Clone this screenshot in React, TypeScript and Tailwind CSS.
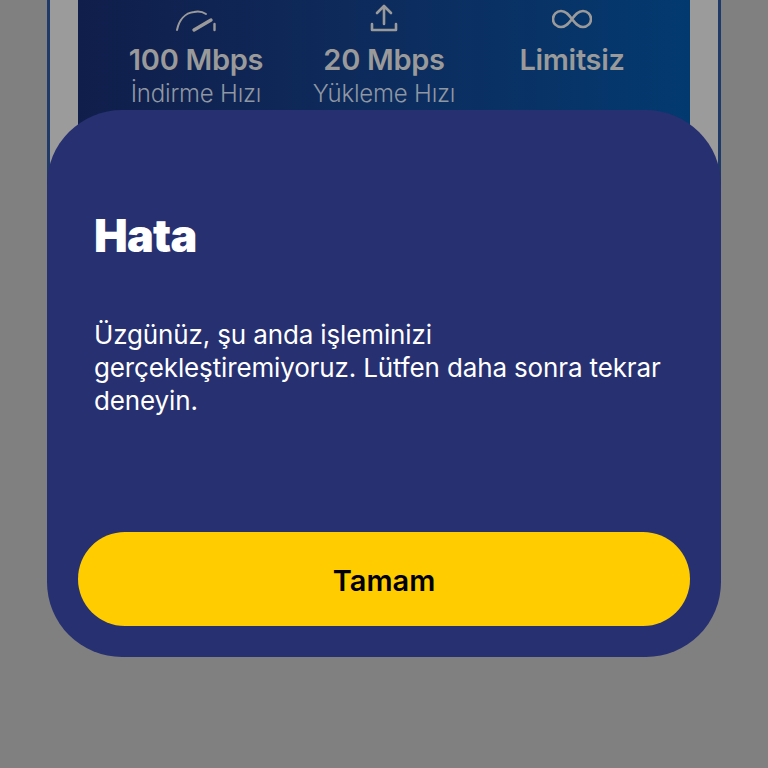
const font = { sans: 'font-["Inter",sans-serif]' };

function GaugeIcon() {
  return (
    <svg width="42" height="26" viewBox="0 0 42 26" fill="none" stroke="#9a9a9a" strokeWidth="2" strokeLinecap="round">
      <path d="M2 23C4 13 10 6 19 5c5-1 9 0 12 2" />
      <path d="M19 23 36 13" strokeWidth="3.4" />
      <path d="M39.500 17v6" strokeWidth="2.4" />
    </svg>
  );
}

function UploadIcon() {
  return (
    <svg width="28" height="30" viewBox="0 0 28 30" fill="none" stroke="#9a9a9a" strokeWidth="2.6" strokeLinecap="round" strokeLinejoin="round">
      <path d="M14 21V4M7 10l7-7 7 7" />
      <path d="M2 21v6h24v-6" />
    </svg>
  );
}

function InfinityIcon() {
  return (
    <svg width="40" height="20" viewBox="0 0 40 20" fill="none" stroke="#9a9a9a" strokeWidth="2.6" className="mb-[4px]">
      <path d="M20 10c-3-4-6-8-11-8a8 8 0 0 0 0 16c5 0 8-4 11-8s6-8 11-8a8 8 0 0 1 0 16c-5 0-8-4-11-8Z" />
    </svg>
  );
}

const stats = [
  { icon: <GaugeIcon />, value: '100 Mbps', label: 'İndirme Hızı' },
  { icon: <UploadIcon />, value: '20 Mbps', label: 'Yükleme Hızı' },
  { icon: <InfinityIcon />, value: 'Limitsiz', label: '' },
];

export default function App() {
  return (
    <div className={`relative h-[768px] w-[768px] overflow-hidden bg-[#808080] ${font.sans}`}>
      {/* page behind the dimmed overlay */}
      <div className="mx-[47px] h-[200px] border-x-[3px] border-[#1f3a68] bg-[#9b9b9b] px-[28px]">
        <div className="grid h-full grid-cols-3 bg-gradient-to-r from-[#101e4b] to-[#023a70] px-[24px]">
          {stats.map((s) => (
            <div key={s.value} className="flex flex-col items-center">
              <div className="flex h-[33px] items-end justify-center">{s.icon}</div>
              <div className="mt-[9px] text-[29px] leading-[36px] font-semibold tracking-[-0.3px] text-[#9a9a9a]">{s.value}</div>
              <div className="mt-[1px] text-[24px] leading-[30px] font-light tracking-[-0.2px] text-[#8f97a3]">{s.label}</div>
            </div>
          ))}
        </div>
      </div>

      {/* error dialog */}
      <div className="absolute top-[110px] left-[47px] flex h-[547px] w-[674px] flex-col rounded-[75px] bg-[#273070] px-[31px] pb-[31px]">
        <h1 className="mt-[100px] px-[16px] text-[45px] leading-[52px] font-black tracking-[-0.8px] text-white">Hata</h1>
        <p className="mt-[56px] px-[16px] text-[26px] leading-[33px] font-normal tracking-[-0.14px] text-white">
          Üzgünüz, şu anda işleminizi
          <br />
          gerçekleştiremiyoruz. Lütfen daha sonra tekrar
          <br />
          deneyin.
        </p>
        <button className="mt-auto h-[94px] w-full rounded-full bg-[#ffcc00] pt-[4px] text-[29px] font-semibold text-black">
          Tamam
        </button>
      </div>
    </div>
  );
}
